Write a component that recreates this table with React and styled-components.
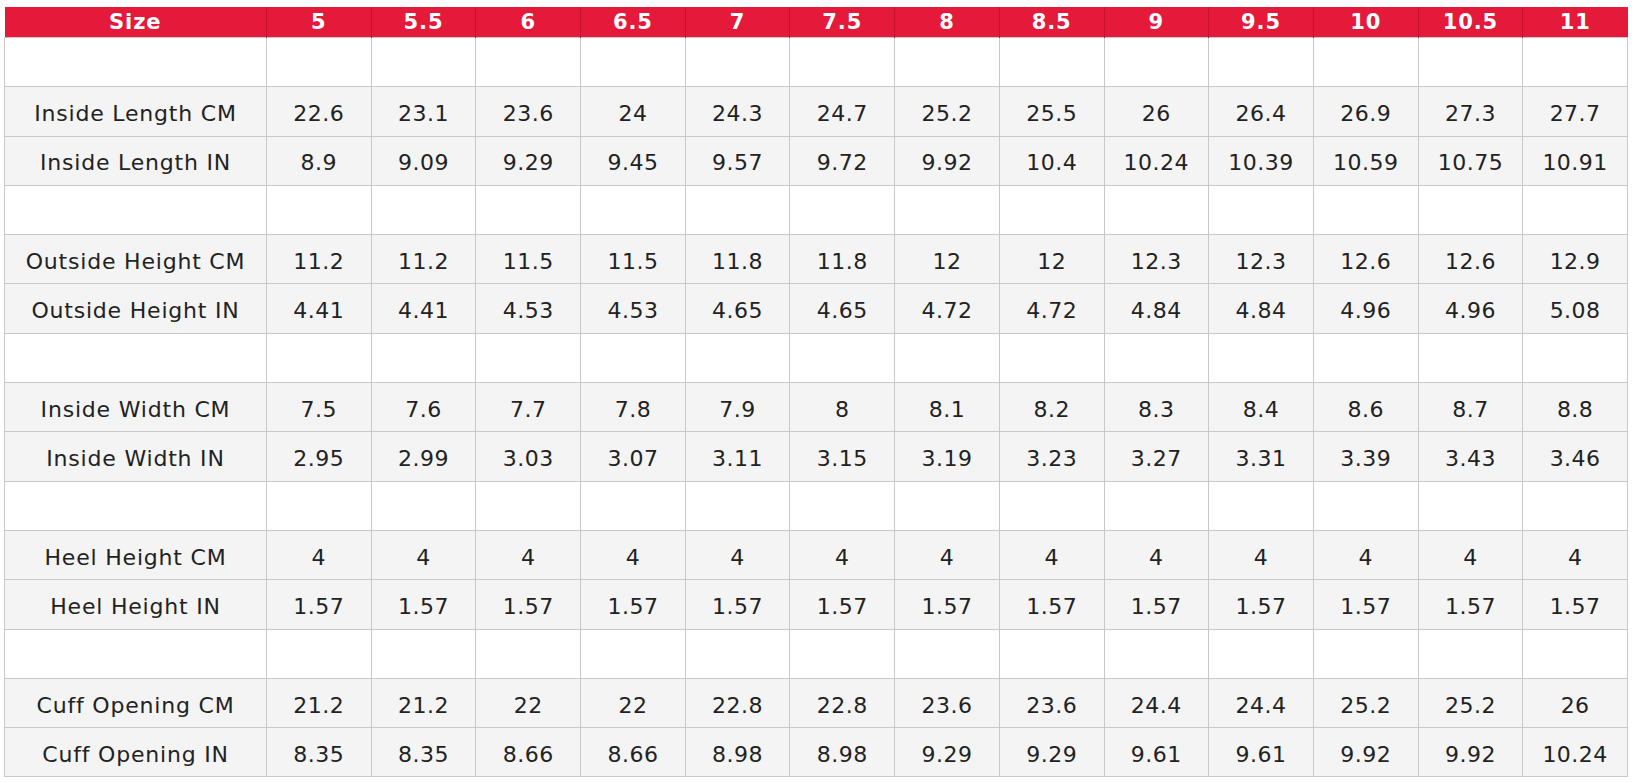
import React from "react";
import styled, { createGlobalStyle } from "styled-components";

const Global = createGlobalStyle`
  html, body { margin: 0; padding: 0; background: #ffffff; }
  body { font-family: "DejaVu Sans", Verdana, sans-serif; }
`;

const Page = styled.div`
  padding: 7px 6px 0 4px;
`;

const Table = styled.table`
  width: 1624px;
  border-collapse: collapse;
  table-layout: fixed;
`;

const HeadCell = styled.th`
  background: #e5193a;
  color: #ffffff;
  font-weight: bold;
  font-size: 21px;
  letter-spacing: 0.9px;
  height: 30px;
  padding: 0;
  text-align: center;
  border-right: 1px solid #c4122f;
  &:last-child { border-right: none; }
`;

const Cell = styled.td`
  height: 44.3px;
  padding: 4px 0 0;
  text-align: center;
  font-size: 22px;
  letter-spacing: ${(p) => (p.$label ? "0.8px" : "0.5px")};
  color: #222222;
  background: ${(p) => (p.$blank ? "#ffffff" : "#f4f4f4")};
  border: 1px solid #c9c9c9;
`;

const sizes = ["5", "5.5", "6", "6.5", "7", "7.5", "8", "8.5", "9", "9.5", "10", "10.5", "11"];

const groups = [
  [
    ["Inside Length CM", ["22.6", "23.1", "23.6", "24", "24.3", "24.7", "25.2", "25.5", "26", "26.4", "26.9", "27.3", "27.7"]],
    ["Inside Length IN", ["8.9", "9.09", "9.29", "9.45", "9.57", "9.72", "9.92", "10.4", "10.24", "10.39", "10.59", "10.75", "10.91"]],
  ],
  [
    ["Outside Height CM", ["11.2", "11.2", "11.5", "11.5", "11.8", "11.8", "12", "12", "12.3", "12.3", "12.6", "12.6", "12.9"]],
    ["Outside Height IN", ["4.41", "4.41", "4.53", "4.53", "4.65", "4.65", "4.72", "4.72", "4.84", "4.84", "4.96", "4.96", "5.08"]],
  ],
  [
    ["Inside Width CM", ["7.5", "7.6", "7.7", "7.8", "7.9", "8", "8.1", "8.2", "8.3", "8.4", "8.6", "8.7", "8.8"]],
    ["Inside Width IN", ["2.95", "2.99", "3.03", "3.07", "3.11", "3.15", "3.19", "3.23", "3.27", "3.31", "3.39", "3.43", "3.46"]],
  ],
  [
    ["Heel Height CM", ["4", "4", "4", "4", "4", "4", "4", "4", "4", "4", "4", "4", "4"]],
    ["Heel Height IN", ["1.57", "1.57", "1.57", "1.57", "1.57", "1.57", "1.57", "1.57", "1.57", "1.57", "1.57", "1.57", "1.57"]],
  ],
  [
    ["Cuff Opening CM", ["21.2", "21.2", "22", "22", "22.8", "22.8", "23.6", "23.6", "24.4", "24.4", "25.2", "25.2", "26"]],
    ["Cuff Opening IN", ["8.35", "8.35", "8.66", "8.66", "8.98", "8.98", "9.29", "9.29", "9.61", "9.61", "9.92", "9.92", "10.24"]],
  ],
];

export default function App() {
  return (
    <Page>
      <Global />
      <Table>
        <colgroup>
          <col style={{ width: 262 }} />
          {sizes.map((s) => (
            <col key={s} />
          ))}
        </colgroup>
        <thead>
          <tr>
            <HeadCell>Size</HeadCell>
            {sizes.map((s) => (
              <HeadCell key={s}>{s}</HeadCell>
            ))}
          </tr>
        </thead>
        <tbody>
          {groups.map((g, gi) => (
            <React.Fragment key={gi}>
              <tr>
                <Cell $blank />
                {sizes.map((s) => (
                  <Cell $blank key={s} />
                ))}
              </tr>
              {g.map(([label, vals]) => (
                <tr key={label}>
                  <Cell $label>{label}</Cell>
                  {vals.map((v, i) => (
                    <Cell key={i}>{v}</Cell>
                  ))}
                </tr>
              ))}
            </React.Fragment>
          ))}
        </tbody>
      </Table>
    </Page>
  );
}
